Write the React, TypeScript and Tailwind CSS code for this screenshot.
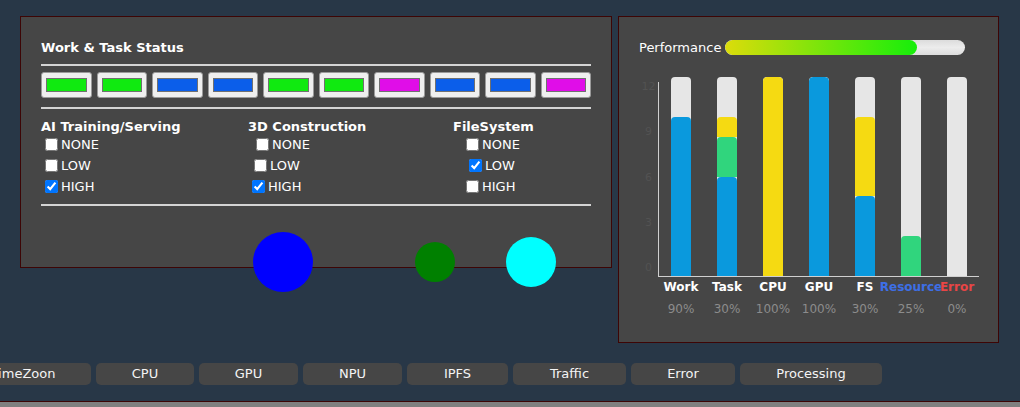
import React from "react";

const statusColors = [
  "#10ea10", "#10ea10", "#0b5eea", "#0b5eea", "#10ea10",
  "#10ea10", "#e00de8", "#0b5eea", "#0b5eea", "#e00de8",
];

const groups = [
  { title: "AI Training/Serving", width: "w-[207px]", checked: 2, offsets: ["ml-[4px]", "ml-[4px]", "ml-[4px]"] },
  { title: "3D Construction", width: "w-[205px]", checked: 2, offsets: ["ml-[8px]", "ml-[6px]", "ml-[4px]"] },
  { title: "FileSystem", width: "flex-1", checked: 1, offsets: ["ml-[13px]", "ml-[16px]", "ml-[13px]"] },
];

const levels = ["NONE", "LOW", "HIGH"];

const BLUE = "#0a99dd";
const YELLOW = "#f5da12";
const GREEN = "#30d57d";

// segments top -> bottom, heights in px (bar is 199px)
const bars = [
  { label: "Work", pct: "90%", color: "text-white", segs: [{ c: BLUE, h: 159 }] },
  { label: "Task", pct: "30%", color: "text-white", segs: [{ c: YELLOW, h: 20 }, { c: GREEN, h: 40 }, { c: BLUE, h: 99 }] },
  { label: "CPU", pct: "100%", color: "text-white", segs: [{ c: YELLOW, h: 199 }] },
  { label: "GPU", pct: "100%", color: "text-white", segs: [{ c: BLUE, h: 199 }] },
  { label: "FS", pct: "30%", color: "text-white", segs: [{ c: YELLOW, h: 79 }, { c: BLUE, h: 80 }] },
  { label: "Resource", pct: "25%", color: "text-[#3d6fe6]", segs: [{ c: GREEN, h: 40 }] },
  { label: "Error", pct: "0%", color: "text-[#e84545]", segs: [] as { c: string; h: number }[] },
];

const tabs = [
  { name: "TimeZoon", w: "w-[136px] ml-[-45px]" },
  { name: "CPU", w: "w-[98px]" },
  { name: "GPU", w: "w-[99px]" },
  { name: "NPU", w: "w-[99px]" },
  { name: "IPFS", w: "w-[101px]" },
  { name: "Traffic", w: "w-[113px]" },
  { name: "Error", w: "w-[104px]" },
  { name: "Processing", w: "w-[142px]" },
];

const App = () => {
  return (
    <div className="w-[1020px] h-[407px] overflow-hidden bg-[#283747] font-['DejaVu_Sans',sans-serif] text-white">
      <div className="flex items-start pt-[16px] pl-[20px] gap-[6px] h-[343px]">
        {/* 작업 상태 패널 */}
        <section className="w-[592px] h-[252px] shrink-0 border border-[#3d0505] bg-[#464646] px-[20px] pt-[23px]">
          <h3 className="font-bold text-[13px] leading-[15px]">Work &amp; Task Status</h3>
          <div className="mt-[9px] h-[2px] bg-[#d4d4d4]" />

          <div className="mt-[6px] grid grid-cols-10 gap-[5px]">
            {statusColors.map((c, i) => (
              <div
                key={i}
                className="h-[26px] rounded-[3px] border border-[#9a9a9a] bg-[#efefef] px-[4px] py-[5px] flex"
              >
                <div className="flex-1 border border-[#707070]" style={{ backgroundColor: c }} />
              </div>
            ))}
          </div>

          <div className="mt-[9px] h-[2px] bg-[#d4d4d4]" />

          <div className="flex mt-[10px]">
            {groups.map((g) => (
              <article key={g.title} className={g.width}>
                <h4 className="font-bold text-[13px] leading-[15px]">{g.title}</h4>
                {levels.map((lv, i) => (
                  <label key={lv} className="flex items-center h-[21px] text-[13px] leading-[21px]">
                    <input
                      type="checkbox"
                      readOnly
                      checked={i === g.checked}
                      className={`${g.offsets[i]} mr-[3px] my-0 w-[13px] h-[13px]`}
                    />
                    <span>{lv}</span>
                  </label>
                ))}
              </article>
            ))}
          </div>

          <div className="mt-[7px] h-[2px] bg-[#d4d4d4]" />

          <div className="flex items-center h-[112px]">
            <span className="ml-[212px] w-[60px] h-[60px] rounded-full bg-[#0000ff] shrink-0" />
            <span className="ml-[102px] w-[40px] h-[40px] rounded-full bg-[#008000] shrink-0" />
            <span className="ml-[51px] w-[50px] h-[50px] rounded-full bg-[#00ffff] shrink-0" />
          </div>
        </section>

        {/* 성능 차트 패널 */}
        <section className="w-[381px] h-[327px] shrink-0 border border-[#3d0505] bg-[#464646] pl-[20px] pt-[23px]">
          <div className="flex items-center h-[15px]">
            <span className="text-[13px] leading-[15px] w-[86px]">Performance</span>
            <div className="w-[240px] h-[15px] rounded-full bg-[linear-gradient(to_bottom,#dcdcdc,#ececec_50%,#dcdcdc)] overflow-hidden">
              <div className="h-full w-[192px] rounded-full bg-[linear-gradient(to_right,#dcdc0b,#16ee0b)]" />
            </div>
          </div>

          <div className="flex mt-[22px] h-[200px]">
            <div className="w-[19px] flex flex-col justify-between items-center pt-[3px] pb-[3px] text-[11px] leading-[13px] text-[#525252]">
              <span>12</span>
              <span>9</span>
              <span>6</span>
              <span>3</span>
              <span>0</span>
            </div>
            <div className="w-px mt-[5px] bg-[#d0d0d0]" />
            <div className="flex flex-col">
              <div className="flex ml-[12px] gap-[26px] h-[199px]">
                {bars.map((b) => (
                  <div key={b.label} className="w-[20px] h-full rounded-t-[4px] bg-[#e6e6e6] flex flex-col justify-end overflow-hidden">
                    {b.segs.map((s, i) => (
                      <div key={i} className="w-full rounded-t-[4px]" style={{ height: s.h, backgroundColor: s.c }} />
                    ))}
                  </div>
                ))}
              </div>
              <div className="h-px w-[320px] bg-[#d0d0d0]" />
            </div>
          </div>

          <div className="flex ml-[32px] gap-[26px] mt-[3px]">
            {bars.map((b) => (
              <div key={b.label} className="w-[20px] flex flex-col items-center">
                <span className={`whitespace-nowrap font-bold text-[12px] leading-[14px] ${b.color}`}>{b.label}</span>
                <span className="whitespace-nowrap mt-[8px] text-[12px] leading-[14px] text-[#8c8c8c]">{b.pct}</span>
              </div>
            ))}
          </div>
        </section>
      </div>

      {/* 하단 탭 */}
      <nav className="flex gap-[5px] mt-[20px]">
        {tabs.map((t) => (
          <button
            key={t.name}
            className={`${t.w} shrink-0 h-[22px] rounded-[5px] bg-[#464646] text-[13px] text-[#f4f4f4] flex items-center justify-center`}
          >
            {t.name}
          </button>
        ))}
      </nav>

      <div className="mt-[16px] h-[10px] border-t border-[#3d0505] bg-[#808080]" />
    </div>
  );
};

export default App;
